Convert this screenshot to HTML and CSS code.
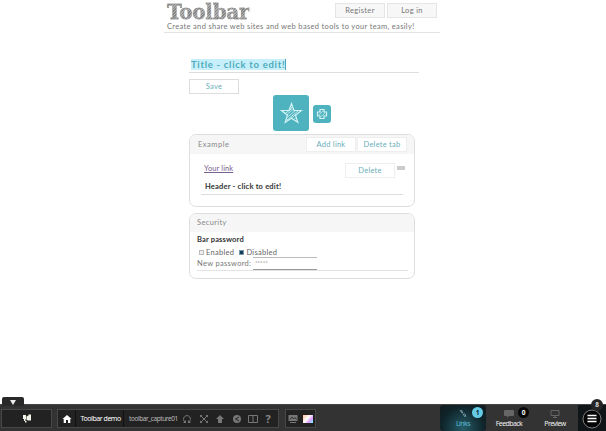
FILE: index.html
```
<!DOCTYPE html>
<html lang="en">
<head>
<meta charset="utf-8">
<title>Toolbar</title>
<link rel="stylesheet" href="styles.css">
</head>
<body>
<header class="masthead">
  <div class="brand-row">
    <h1 class="brand">Toolbar</h1>
    <nav class="account"><button class="btn gray">Register</button><button class="btn gray">Log in</button></nav>
  </div>
  <p class="tagline">Create and share web sites and web based tools to your team, easily!</p>
</header>
<main class="editor">
  <div class="title-field"><span class="selected">Title - click to edit!</span></div>
  <button class="btn save">Save</button>
  <div class="tabs">
    <div class="tab star">
      <svg width="24" height="24" viewBox="0 0 24 24" fill="none" stroke="#d5f3f5">
        <path d="M12.500 2.500l2.500 7h7.500l-6 4.800 2.300 7-6.300-4-6.300 4 2.300-7-6-4.800h7.500z" stroke-width="1.200"/>
        <path d="M10.500 9.500l2.500-4M6 12.500l7-5M8 13.500l6-5M8.500 16l8-6.500M8 19l11-9M12 17.500l4.500-4M15.500 18l1.500-1.500" stroke-width=".8"/>
      </svg>
    </div>
    <div class="tab plus">
      <svg width="12" height="12" viewBox="0 0 12 12" fill="none" stroke="#d5f3f5">
        <path d="M4 1.500h4V4h2.500v4H8v2.500H4V8H1.500V4H4z" stroke-width="1.200"/>
        <path d="M3 7l4-4M5 8.500L9 5" stroke-width=".7"/>
      </svg>
    </div>
  </div>
  <section class="card example">
    <div class="card-head"><span class="example-name">Example</span><span class="card-actions"><button class="btn">Add link</button><button class="btn">Delete tab</button></span></div>
    <div class="link-row"><a class="link">Your link</a><button class="btn">Delete</button><span class="handle"></span></div>
    <div class="header-field"><b class="header-text">Header - click to edit!</b></div>
  </section>
  <section class="card security">
    <div class="card-head"><span class="security-name">Security</span></div>
    <div class="security-body">
      <b class="bar-label">Bar password</b>
      <div class="choices"><i class="radio"></i><span class="enabled">Enabled</span><i class="radio on"></i><span class="disabled">Disabled</span></div>
      <div class="password"><span class="pass-label">New password:</span><span class="input">*****</span></div>
    </div>
  </section>
</main>
<footer class="bar">
  <div class="collapse"><svg width="8" height="6"><path d="M1 0h6L4 5z" fill="#eee"/></svg></div>
  <div class="panel announce"><svg width="10" height="9" viewBox="0 0 10 9" fill="#f4f4e8"><path d="M1 1h3v4H3.500v2H2V5H1zM4.500 2.500L6.500 1.500V.5H9v6H6.500L4.500 6v2.500H3V7h1.500z"/></svg></div>
  <div class="panel tools">
    <div class="home"><svg width="10" height="10" viewBox="0 0 10 10" fill="#fff"><path d="M5 1l4.500 4H8.300v4H6V6H4v3H1.700V5H.5z"/></svg></div>
    <div class="name"><span class="demo">Toolbar demo</span></div>
    <div class="file"><span class="capture">toolbar_capture01</span></div>
    <div class="icons">
      <svg viewBox="0 0 10 10"><path class="line" d="M3 8A3.500 3.500 0 1 1 7 8"/><path d="M6 6v3h3zM4 6v3H1z"/></svg>
      <svg viewBox="0 0 10 10"><path class="line" d="M2 2l6 6M8 2L2 8"/><path d="M1 1h2.500L1 3.500zM9 1v2.500L6.500 1zM1 9V6.500L3.500 9zM9 9H6.500L9 6.500z"/></svg>
      <svg viewBox="0 0 10 10"><path d="M5 1l4 4H7v4H3V5H1z"/></svg>
      <svg viewBox="0 0 10 10"><circle cx="5" cy="5" r="4"/><path d="M7 3L3.500 5 7 7" fill="none" stroke="#222"/></svg>
      <svg viewBox="0 0 10 10"><path class="line" d="M.5 1.500h9v7h-9zM5 1.500v7"/></svg>
      <span class="help">?</span>
    </div>
  </div>
  <div class="panel looks">
    <svg width="10" height="10" viewBox="0 0 10 10"><path d="M.5 1h9v6h-9zM2 8h6v1H2z" fill="#777"/><path d="M2 5.500L4 3l1.500 2L7 3.500 8.500 5.500" fill="none" stroke="#333"/></svg>
    <span class="swatch"></span>
  </div>
  <nav class="views">
    <div class="view active">
      <svg width="10" height="9" viewBox="0 0 10 9"><path d="M2 1l2 3M3.500 1l1.500 3.500M5 5l2 3M6.500 4.500L8 7.500" stroke="#8db8c2" stroke-width=".8"/></svg>
      <span class="links">Links</span><i class="badge blue">1</i>
    </div>
    <div class="view">
      <svg width="10" height="9" viewBox="0 0 10 9"><path d="M1 1h8q1 0 1 1v4q0 1-1 1H5L3 9V7H1Q0 7 0 6V2q0-1 1-1z" fill="#666"/></svg>
      <span class="feedback">Feedback</span><i class="badge black">0</i>
    </div>
    <div class="view">
      <svg width="10" height="9" viewBox="0 0 10 9"><path d="M1 1.500h8v5H1zM5 6.500v2M3 8.500h4" fill="none" stroke="#666"/></svg>
      <span class="preview">Preview</span>
    </div>
    <div class="menu">
      <svg width="20" height="20" viewBox="0 0 20 20"><circle cx="10" cy="10" r="9" fill="#050505" stroke="#999" stroke-width=".8"/><path d="M5.500 6.500h9M5.500 9.500h9M5.500 12.500h9" stroke="#fff" stroke-width="1.500"/></svg>
      <i class="count">8</i>
    </div>
  </nav>
</footer>
</body>
</html>
```
FILE: styles.css
```
* { box-sizing: border-box; }
body { margin: 0; height: 431px; overflow: hidden; display: flex; flex-direction: column; background: #fff; font: 7.5px/10px Lato, sans-serif; color: #777; }
button { font: inherit; padding: 0; }
svg { display: block; flex: none; }
span, a, b { white-space: nowrap; }
.masthead { width: 276px; height: 33px; margin-left: 164px; border-bottom: 1px solid #e2e2e2; }
.brand-row { display: flex; justify-content: space-between; height: 21px; padding: 0 3px; }
.brand { margin: 0; font: bold 20px/24px "DejaVu Serif", serif; letter-spacing: -.3px; color: transparent; background: repeating-linear-gradient(135deg, #858585 0 1px, #b0b0b0 1px 2px); background-clip: text; -webkit-background-clip: text; -webkit-text-stroke: .3px #8c8c8c; }
.account { display: flex; gap: 2px; padding-top: 3px; }
.btn { width: 50px; height: 15px; border: 1px solid #e5e5e5; background: #fff; color: #6aaeb8; letter-spacing: .25px; line-height: 14px; }
.gray { background: #f7f7f7; color: #777; letter-spacing: .35px; }
.tagline { margin: 0 3px; line-height: 11px; white-space: nowrap; letter-spacing: .33px; }
.editor { width: 230px; margin-left: 189px; padding-top: 25px; display: flex; flex-direction: column; flex: 1; }
.title-field { height: 15px; border-bottom: 1px solid #dedede; padding: 1px 2px; }
.selected { display: inline-block; height: 11px; background: #c7effb; border-right: 1px solid #49a4b7; color: #4dabba; font: bold 9.5px/11px Lato, sans-serif; letter-spacing: .7px; }
.save { margin-top: 6px; border-color: #ddd; }
.tabs { height: 36px; margin: 1px 0 3px 84px; display: flex; align-items: center; gap: 4px; }
.tab { display: flex; align-items: center; justify-content: center; background: #4eb2bf; border-radius: 3px; }
.star { width: 36px; height: 36px; }
.plus { width: 18px; height: 18px; margin-top: 2px; }
.card { width: 226px; border: 1px solid #dedede; border-radius: 7px; overflow: hidden; }
.example { height: 73px; }
.security { height: 66px; margin-top: 6px; }
.card-head { height: 19px; display: flex; align-items: center; background: #f6f6f6; justify-content: space-between; padding: 0 7px 0 8px; color: #888; letter-spacing: .5px; }
.security .card-head { height: 18px; padding-left: 7px; line-height: 12px; letter-spacing: .35px; }
.card-actions { display: flex; gap: 1px; }
.card-actions .btn { border-color: #eee; }
.link-row { height: 28px; display: flex; padding: 10px 9px 0 14px; }
.link { color: #79638c; text-decoration: underline; letter-spacing: .1px; }
.link-row .btn { margin: -1px 2px 0 auto; border-color: #eee; }
.handle { width: 8px; height: 4px; margin-top: 2px; background: #ccc; }
.header-field { height: 13px; margin: 0 11px; padding-left: 4px; border-bottom: 1px solid #ddd; color: #333; letter-spacing: .2px; }
.security-body { padding: 2px 6px 0 7px; }
.bar-label { display: block; color: #333; line-height: 11px; letter-spacing: .15px; }
.choices { height: 11px; margin-top: 2px; display: flex; align-items: center; padding-left: 2px; color: #666; letter-spacing: .3px; }
.radio { width: 5px; height: 5px; margin-right: 2px; border: 1px solid #bbb; background: #eee; }
.radio.on { background: #123e5b; border-color: #7598ac; margin-left: 5px; }
.password { height: 13px; display: flex; border-bottom: 1px solid #e3e3e3; }
.pass-label { width: 56px; line-height: 12px; letter-spacing: .3px; }
.input { width: 64px; height: 13px; margin-top: -1px; border: solid #bbb; border-width: 1px 0; border-bottom-color: #999; padding-left: 2px; font-size: 6px; }
.bar { position: relative; height: 27px; background: #333; display: flex; padding: 4px 0 0 1px; font: 7px/10px "Noto Sans", sans-serif; letter-spacing: -.35px; color: #eee; border-top: 1px solid #444; }
.collapse { position: absolute; left: 2px; top: -8px; width: 22px; height: 9px; border-radius: 2px 2px 0 0; background: #292929; display: flex; justify-content: center; padding-top: 3px; }
.panel { height: 19px; border: 1px solid #484848; background: #222; display: flex; align-items: center; }
.announce { width: 51px; justify-content: center; }
.tools { width: 222px; margin-left: 5px; }
.home { width: 18px; height: 17px; padding: 4px; border-right: 1px solid #111; flex: none; }
.name { width: 47px; padding-left: 4.5px; flex: none; }
.demo { letter-spacing: -.45px; color: #fff; }
.file { width: 54px; height: 17px; line-height: 17px; padding-left: 5px; border-left: 1px solid #111; font-size: 6.500px; letter-spacing: -.42px; color: #bbb; flex: none; }
.icons { display: flex; align-items: center; gap: 6.500px; padding-left: 5px; }
.icons svg { width: 10px; height: 10px; fill: #777; }
.icons svg .line { fill: none; stroke: #777; }
.help { font: bold 11px/12px "Open Sans", sans-serif; color: #888; padding-left: 1px; }
.looks { width: 31px; margin-left: 6px; gap: 5px; padding-left: 2px; }
.swatch { width: 10px; height: 8px; background: linear-gradient(130deg, #fb9, #fff 45%, #d9f 70%, #6ff); }
.views { display: flex; margin: -4px 0 0 auto; height: 26px; }
.view { position: relative; width: 46px; display: flex; flex-direction: column; align-items: center; padding-top: 4px; line-height: 12px; letter-spacing: -.6px; }
.active { background: radial-gradient(ellipse at 50% 90%, #245c68, #10242a 65%, #101b1f); border-radius: 3px; color: #5bbace; }
.badge, .count { position: absolute; border-radius: 50%; text-align: center; font-style: normal; font-weight: bold; font-size: 6.500px; letter-spacing: 0; }
.badge { width: 11px; height: 11px; line-height: 11px; top: 2px; right: 3px; }
.blue { background: #65cce5; color: #123; }
.black { background: #080808; color: #fff; }
.menu { position: relative; width: 28px; background: #101518; padding: 4px; }
.count { width: 12px; height: 12px; line-height: 11px; top: -6px; right: 3px; background: #252525; color: #ddd; }
```
